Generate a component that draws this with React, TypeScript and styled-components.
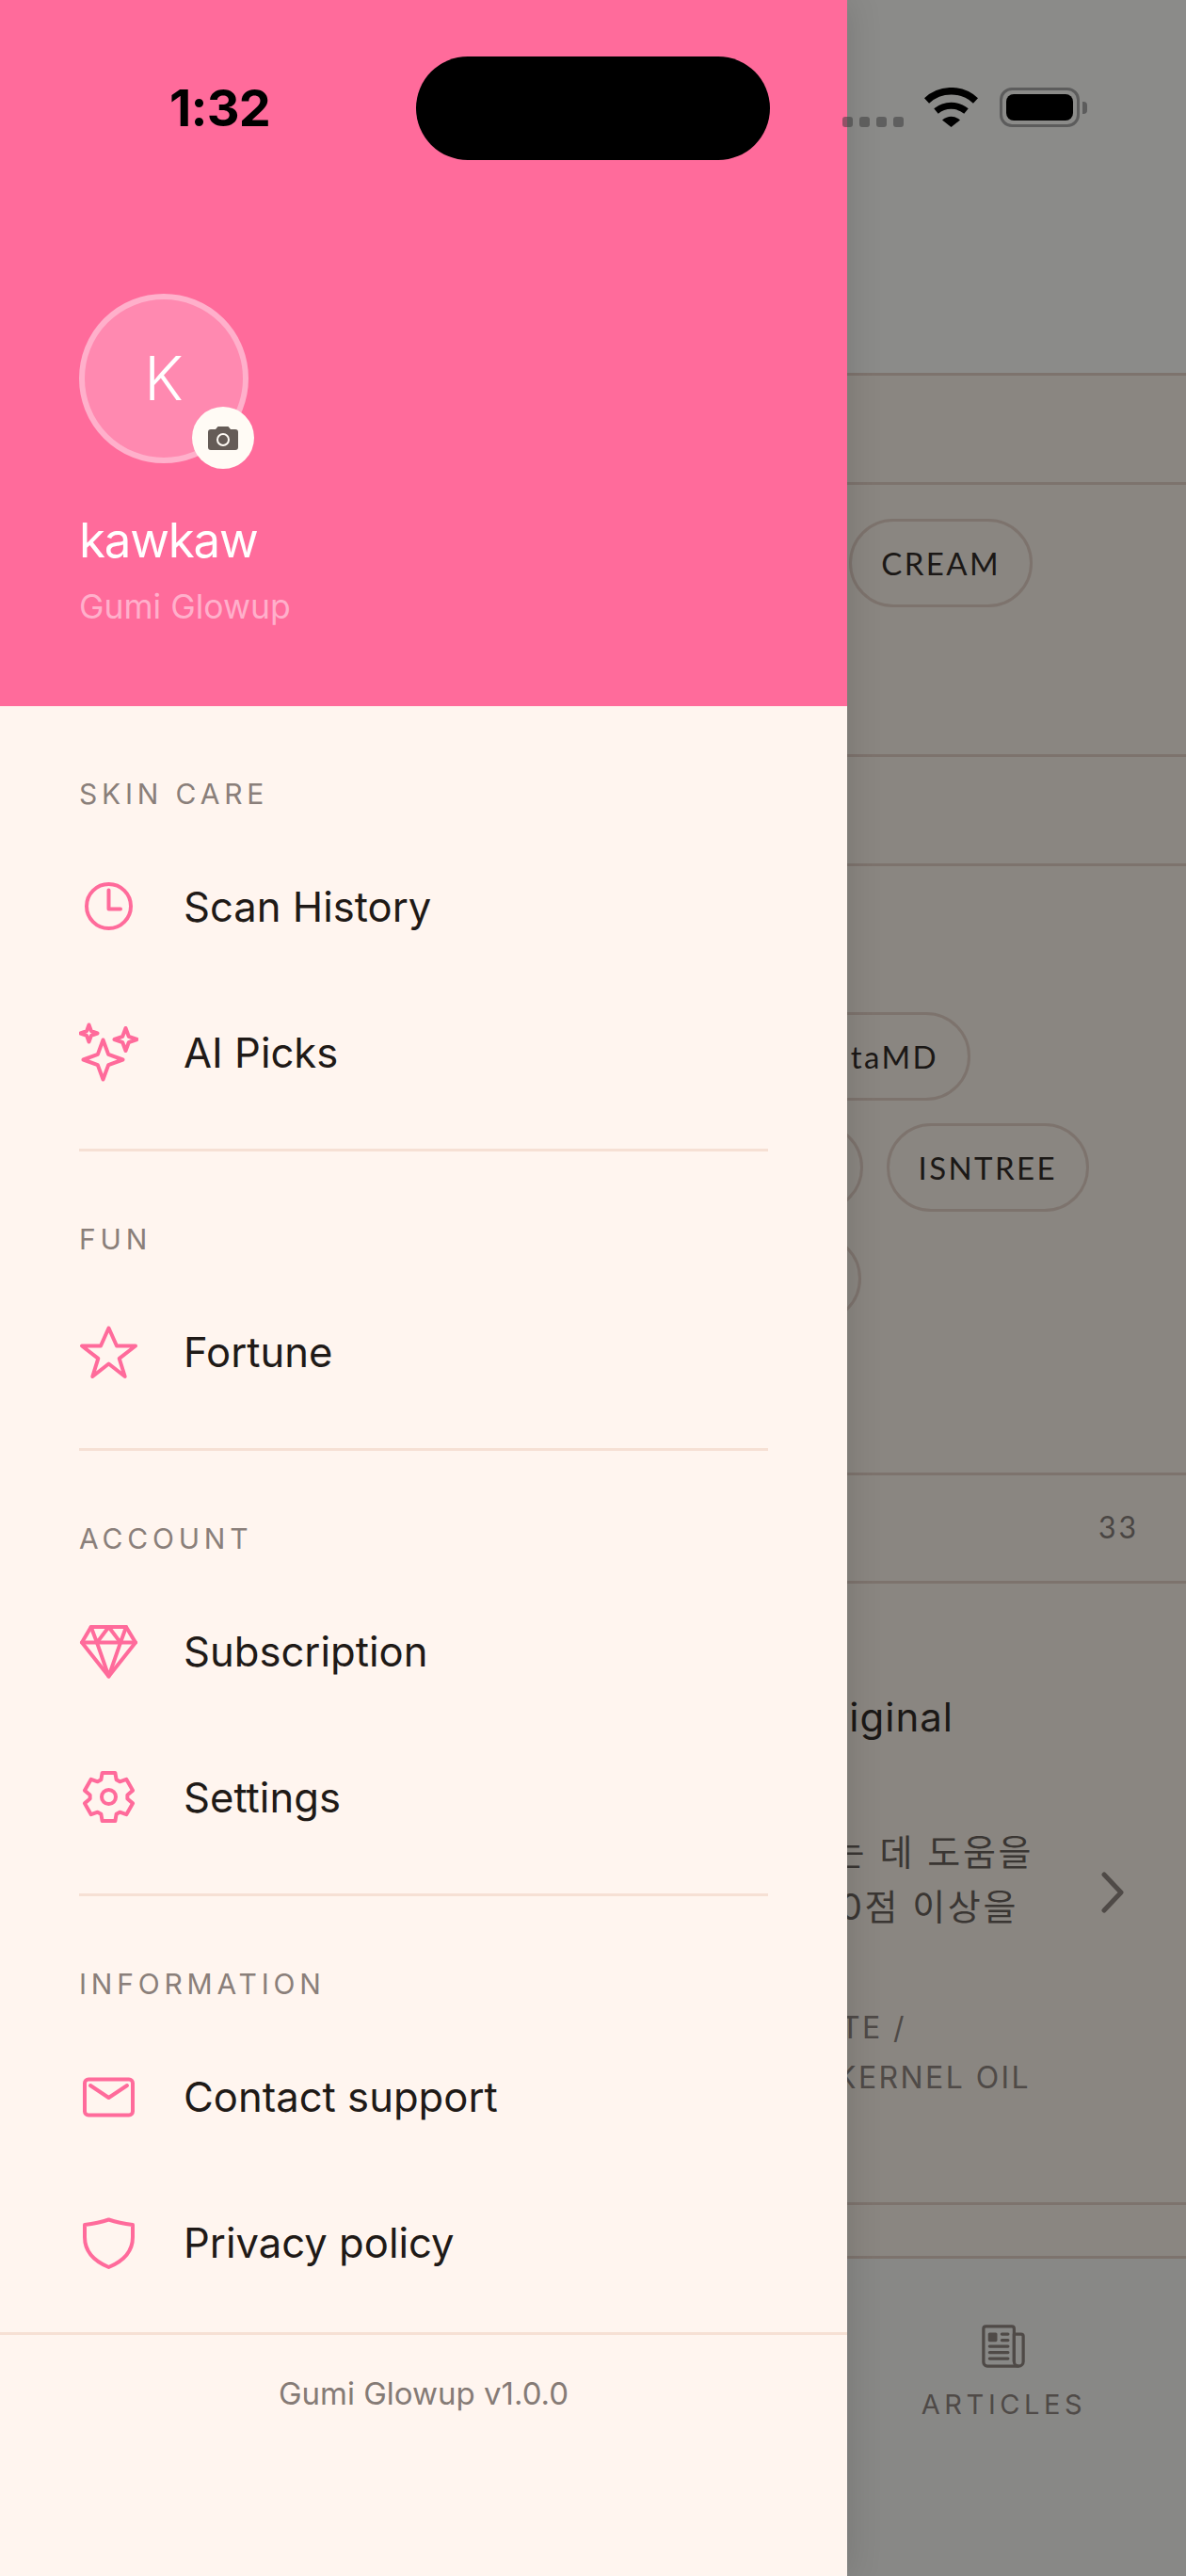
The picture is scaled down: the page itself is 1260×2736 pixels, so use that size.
import styled, { createGlobalStyle } from 'styled-components'
import { IoNewspaperOutline } from 'react-icons/io5'

const GlobalStyle = createGlobalStyle`
    html, body {
        margin: 0;
        padding: 0;
        background: #8a8681;
    }
    * {
        box-sizing: border-box;
    }
`

const PINK = '#ff6b9b'

const Phone = styled.div`
    position: relative;
    display: flex;
    width: 1260px;
    height: 2736px;
    overflow: hidden;
    font-family: Inter, 'Noto Sans', sans-serif;
`

/* status bar floats above both the drawer and the dimmed page */
const StatusBar = styled.div`
    position: absolute;
    top: 0;
    left: 0;
    z-index: 3;
    display: flex;
    align-items: flex-start;
    width: 100%;
    height: 170px;
`

const Clock = styled.div`
    width: 258px;
    margin: 85px 0 0 180px;
    font-size: 54px;
    line-height: 60px;
    font-weight: 700;
    color: #000;
    letter-spacing: -0.8px;
`

const Island = styled.div`
    width: 376px;
    height: 110px;
    margin: 60px 0 0 4px;
    border-radius: 55px;
    background: #000;
`

const SignalDots = styled.div`
    display: flex;
    gap: 7px;
    margin: 124px 0 0 77px;
`

const SignalDot = styled.span`
    width: 11px;
    height: 11px;
    border-radius: 3px;
    background: rgba(60, 60, 60, 0.55);
`

const WifiIcon = styled.svg`
    width: 57px;
    height: 42px;
    margin: 93px 0 0 22px;
`

const Battery = styled.div`
    position: relative;
    display: flex;
    width: 85px;
    height: 42px;
    margin: 93px 0 0 23px;
    padding: 4px;
    border: 3px solid #5c5c5c;
    border-radius: 13px;
`

const BatteryFill = styled.div`
    flex: 1;
    border-radius: 8px;
    background: #000;
`

const BatteryCap = styled.div`
    width: 5px;
    height: 13px;
    margin: 108px 0 0 3px;
    border-radius: 0 4px 4px 0;
    background: #5c5c5c;
`

const Drawer = styled.aside`
    position: relative;
    z-index: 2;
    display: flex;
    flex-direction: column;
    flex: 0 0 900px;
    background: #fff5ef;
    box-shadow: 0 0 36px rgba(0, 0, 0, 0.14);
`

const Profile = styled.header`
    height: 750px;
    padding: 312px 0 0 84px;
    background: ${PINK};
`

const AvatarWrap = styled.div`
    position: relative;
    width: 180px;
    height: 180px;
`

const Avatar = styled.div`
    display: flex;
    align-items: center;
    justify-content: center;
    width: 100%;
    height: 100%;
    padding-bottom: 2px;
    border: 6px solid #ffb0cb;
    border-radius: 50%;
    background: #ff89b0;
    font-size: 64px;
    font-weight: 300;
    color: #fff;
`

const CameraBadge = styled.div`
    position: absolute;
    right: -6px;
    bottom: -6px;
    display: flex;
    align-items: center;
    justify-content: center;
    width: 66px;
    height: 66px;
    border-radius: 50%;
    background: #fffbf5;
`

const UserName = styled.div`
    margin-top: 51px;
    font-size: 51px;
    line-height: 62px;
    letter-spacing: -1.2px;
    color: #fff;
`

const AppName = styled.div`
    margin-top: 18px;
    font-size: 35.5px;
    line-height: 44px;
    color: #ffb0cb;
`

const Section = styled.section`
    padding-top: 72px;
`

const SectionLabel = styled.div`
    height: 42px;
    margin: 0 0 21px 84px;
    font-size: 30px;
    line-height: 42px;
    letter-spacing: 4.8px;
    color: #8a7f7a;
`

const Row = styled.div`
    display: flex;
    align-items: center;
    height: 155px;
    padding-left: 84px;
`

const RowIcon = styled.svg`
    flex: none;
    width: 63px;
    height: 63px;
    margin-right: 48px;
    fill: none;
    stroke: ${PINK};
    stroke-width: 4;
    stroke-linecap: round;
    stroke-linejoin: round;
`

const RowText = styled.span`
    padding-top: 2px;
    font-size: 43.6px;
    color: #1f1a17;
`

const Divider = styled.div`
    height: 3px;
    margin: 25px 84px 0;
    background: #f6e0d4;
`

const Footer = styled.footer`
    margin-top: 18px;
    padding-top: 40px;
    border-top: 3px solid #f6e0d4;
    font-size: 33px;
    line-height: 44px;
    text-align: center;
    color: #857b76;
`

/* dimmed app page behind the drawer, clipped by the drawer edge */
const Dimmed = styled.main`
    display: flex;
    flex-direction: column;
    flex: 1;
    min-width: 0;
    overflow: hidden;
    background: #8a8681;
`

const TopArea = styled.div`
    flex: none;
    height: 399px;
    border-bottom: 3px solid #7d736d;
    background: #8b8b89;
`

const Band = styled.div<{ $height: number }>`
    flex: none;
    height: ${p => p.$height}px;
    border-bottom: 3px solid #7d736d;
`

const ChipArea = styled(Band)<{ $top: number }>`
    display: flex;
    flex-direction: column;
    gap: 24px;
    padding-top: ${p => p.$top}px;
`

const ChipRow = styled.div<{ $inset: number }>`
    display: flex;
    justify-content: flex-end;
    gap: 25px;
    padding-right: ${p => p.$inset}px;
`

const Chip = styled.div<{ $blank?: boolean }>`
    flex: none;
    min-width: ${p => (p.$blank ? '160px' : '0')};
    height: 94px;
    padding: 0 31px;
    border: 3px solid #7d736d;
    border-radius: 47px;
    font-family: Lato, sans-serif;
    font-size: 33px;
    line-height: 88px;
    letter-spacing: 2.4px;
    white-space: nowrap;
    color: #1b1816;
`

const CountBand = styled(Band)`
    display: flex;
    align-items: center;
    justify-content: flex-end;
    padding: 0 50px 3px 0;
    font-family: Lato, sans-serif;
    font-size: 32px;
    letter-spacing: 3px;
    color: #4a4644;
`

const ProductCard = styled(Band)`
    padding-top: 112px;
`

const ProductName = styled.div`
    display: flex;
    justify-content: flex-end;
    padding-right: 247px;
    font-size: 42px;
    line-height: 60px;
    letter-spacing: 1px;
    white-space: nowrap;
    color: #1b1816;
`

const ProductBody = styled.div`
    display: flex;
    align-items: center;
    margin-top: 84px;
`

const DescColumn = styled.div`
    flex: 1;
    min-width: 0;
`

const DescLine = styled.div<{ $inset: number }>`
    display: flex;
    justify-content: flex-end;
    padding-right: ${p => p.$inset}px;
    font-family: Inter, 'Noto Sans CJK KR', sans-serif;
    font-size: 38px;
    line-height: 58px;
    letter-spacing: 2.6px;
    white-space: nowrap;
    color: #3a3633;
`

const Chevron = styled.svg`
    flex: none;
    width: 24px;
    height: 44px;
    margin: 27px 66px 0 20px;
    fill: none;
    stroke: #4f4a47;
    stroke-width: 5;
    stroke-linecap: round;
    stroke-linejoin: round;
`

const Ingredients = styled.div`
    margin-top: 73px;
`

const IngredientLine = styled.div<{ $inset: number }>`
    display: flex;
    justify-content: flex-end;
    padding-right: ${p => p.$inset}px;
    font-size: 32px;
    line-height: 53px;
    letter-spacing: 2.4px;
    white-space: nowrap;
    color: #4f4a47;
`

const TabBar = styled.nav`
    flex: 1;
    display: flex;
    justify-content: center;
    padding: 67px 27px 0 0;
    background: #888886;
`

const Tab = styled.div`
    display: flex;
    flex-direction: column;
    align-items: center;
    gap: 18px;
    color: #4f4a47;
`

const TabLabel = styled.span`
    font-size: 29px;
    line-height: 36px;
    letter-spacing: 4.6px;
`

const sparkle = (cx: number, cy: number, r: number) => {
    const i = r * 0.27
    return `M${cx} ${cy - r}L${cx + i} ${cy - i}L${cx + r} ${cy}L${cx + i} ${cy + i}L${cx} ${cy + r}L${cx - i} ${cy + i}L${cx - r} ${cy}L${cx - i} ${cy - i}Z`
}

// six chunky teeth, one pointing straight up
const gearPath = () => {
    const point = (deg: number, r: number) => {
        const rad = (deg * Math.PI) / 180
        return `${(31.5 + r * Math.cos(rad)).toFixed(2)} ${(31.5 + r * Math.sin(rad)).toFixed(2)}`
    }
    const parts: string[] = []
    for (let t = 0; t < 6; t++) {
        const a = -90 + t * 60
        parts.push(point(a - 24, 20), point(a - 15, 26.5), point(a + 15, 26.5), point(a + 24, 20))
    }
    return `M${parts.join('L')}Z`
}

const menu = [
    {
        label: 'SKIN CARE',
        items: [
            {
                text: 'Scan History',
                icon: (
                    <RowIcon viewBox='0 0 63 63'>
                        <circle cx='31.5' cy='31.5' r='23.5' />
                        <path d='M31.5 14.5V34.5H44' />
                    </RowIcon>
                ),
            },
            {
                text: 'AI Picks',
                icon: (
                    <RowIcon viewBox='0 0 63 63' strokeWidth='3.5'>
                        <path d={sparkle(25.5, 39.5, 21)} />
                        <path d={sparkle(10.5, 11.5, 9)} />
                        <path d={sparkle(49.5, 18, 12)} />
                    </RowIcon>
                ),
            },
        ],
    },
    {
        label: 'FUN',
        items: [
            {
                text: 'Fortune',
                icon: (
                    <RowIcon viewBox='0 0 63 63'>
                        <path d='M31.5 6.5L40 25.5H60L42.7 38.8L48.7 58L31.5 44.5L14.3 58L20.3 38.8L3 25.5H23Z' />
                    </RowIcon>
                ),
            },
        ],
    },
    {
        label: 'ACCOUNT',
        items: [
            {
                text: 'Subscription',
                icon: (
                    <RowIcon viewBox='0 0 63 63' strokeWidth='3.5'>
                        <path d='M12.7 6H50L60 22.6L31.5 58.5L3 22.6Z' />
                        <path d='M3 22.6H60' />
                        <path d='M12.7 6L19 22.6L31.5 6L44 22.6L50 6' />
                        <path d='M19 22.6L31.5 58.5L44 22.6' />
                    </RowIcon>
                ),
            },
            {
                text: 'Settings',
                icon: (
                    <RowIcon viewBox='0 0 63 63' strokeWidth='3.5'>
                        <path d={gearPath()} />
                        <circle cx='31.5' cy='31.5' r='7.5' />
                    </RowIcon>
                ),
            },
        ],
    },
    {
        label: 'INFORMATION',
        items: [
            {
                text: 'Contact support',
                icon: (
                    <RowIcon viewBox='0 0 63 63'>
                        <rect x='6' y='13.5' width='51' height='38' rx='4' />
                        <path d='M12 20L31.5 33L51 20' />
                    </RowIcon>
                ),
            },
            {
                text: 'Privacy policy',
                icon: (
                    <RowIcon viewBox='0 0 63 63'>
                        <path d='M31.5 7.5C24 10 14 12 6 13V26C6 42 17 52 31.5 58C46 52 57 42 57 26V13C49 12 39 10 31.5 7.5Z' />
                    </RowIcon>
                ),
            },
        ],
    },
]

const App = () => {
    return (
        <Phone>
            <GlobalStyle />
            <StatusBar>
                <Clock>1:32</Clock>
                <Island />
                <SignalDots>
                    <SignalDot />
                    <SignalDot />
                    <SignalDot />
                    <SignalDot />
                </SignalDots>
                <WifiIcon viewBox='0 0 57 42'>
                    <path d='M2.5 14A38 38 0 0 1 54.5 14' fill='none' stroke='#000' strokeWidth='7.5' />
                    <path d='M12.5 25A25 25 0 0 1 44.5 25' fill='none' stroke='#000' strokeWidth='7' />
                    <path d='M19 34.5Q28.5 27 38 34.5L28.5 42Z' fill='#000' />
                </WifiIcon>
                <Battery>
                    <BatteryFill />
                </Battery>
                <BatteryCap />
            </StatusBar>

            <Drawer>
                <Profile>
                    <AvatarWrap>
                        <Avatar>K</Avatar>
                        <CameraBadge>
                            <svg width='32' height='25' viewBox='0 0 32 25'>
                                <path
                                    d='M3 3H8L10.5 0H21.5L24 3H29Q32 3 32 6V22Q32 25 29 25H3Q0 25 0 22V6Q0 3 3 3Z'
                                    fill='#655c57'
                                />
                                <circle cx='16' cy='14' r='6' fill='none' stroke='#fffbf5' strokeWidth='2' />
                            </svg>
                        </CameraBadge>
                    </AvatarWrap>
                    <UserName>kawkaw</UserName>
                    <AppName>Gumi Glowup</AppName>
                </Profile>

                {menu.map((section, index) => (
                    <div key={section.label}>
                        <Section>
                            <SectionLabel>{section.label}</SectionLabel>
                            {section.items.map(item => (
                                <Row key={item.text}>
                                    {item.icon}
                                    <RowText>{item.text}</RowText>
                                </Row>
                            ))}
                        </Section>
                        {index < menu.length - 1 && <Divider />}
                    </div>
                ))}

                <Footer>Gumi Glowup v1.0.0</Footer>
            </Drawer>

            <Dimmed>
                <TopArea />
                <Band $height={116} />
                <ChipArea $height={289} $top={36}>
                    <ChipRow $inset={163}>
                        <Chip>CREAM</Chip>
                    </ChipRow>
                </ChipArea>
                <Band $height={116} />
                <ChipArea $height={647} $top={155}>
                    <ChipRow $inset={229}>
                        <Chip>AltaMD</Chip>
                    </ChipRow>
                    <ChipRow $inset={103}>
                        <Chip $blank />
                        <Chip>ISNTREE</Chip>
                    </ChipRow>
                    <ChipRow $inset={345}>
                        <Chip $blank />
                    </ChipRow>
                </ChipArea>
                <CountBand $height={115}>33</CountBand>
                <ProductCard $height={660}>
                    <ProductName>Original</ProductName>
                    <ProductBody>
                        <DescColumn>
                            <DescLine $inset={52}>하는 데 도움을</DescLine>
                            <DescLine $inset={68}>70점 이상을</DescLine>
                        </DescColumn>
                        <Chevron viewBox='0 0 24 44'>
                            <path d='M3 3L21 22L3 41' />
                        </Chevron>
                    </ProductBody>
                    <Ingredients>
                        <IngredientLine $inset={297}>STEARATE /</IngredientLine>
                        <IngredientLine $inset={165}>PALM KERNEL OIL</IngredientLine>
                    </Ingredients>
                </ProductCard>
                <Band $height={57} />
                <TabBar>
                    <Tab>
                        <IoNewspaperOutline size={52} />
                        <TabLabel>ARTICLES</TabLabel>
                    </Tab>
                </TabBar>
            </Dimmed>
        </Phone>
    )
}

export default App
